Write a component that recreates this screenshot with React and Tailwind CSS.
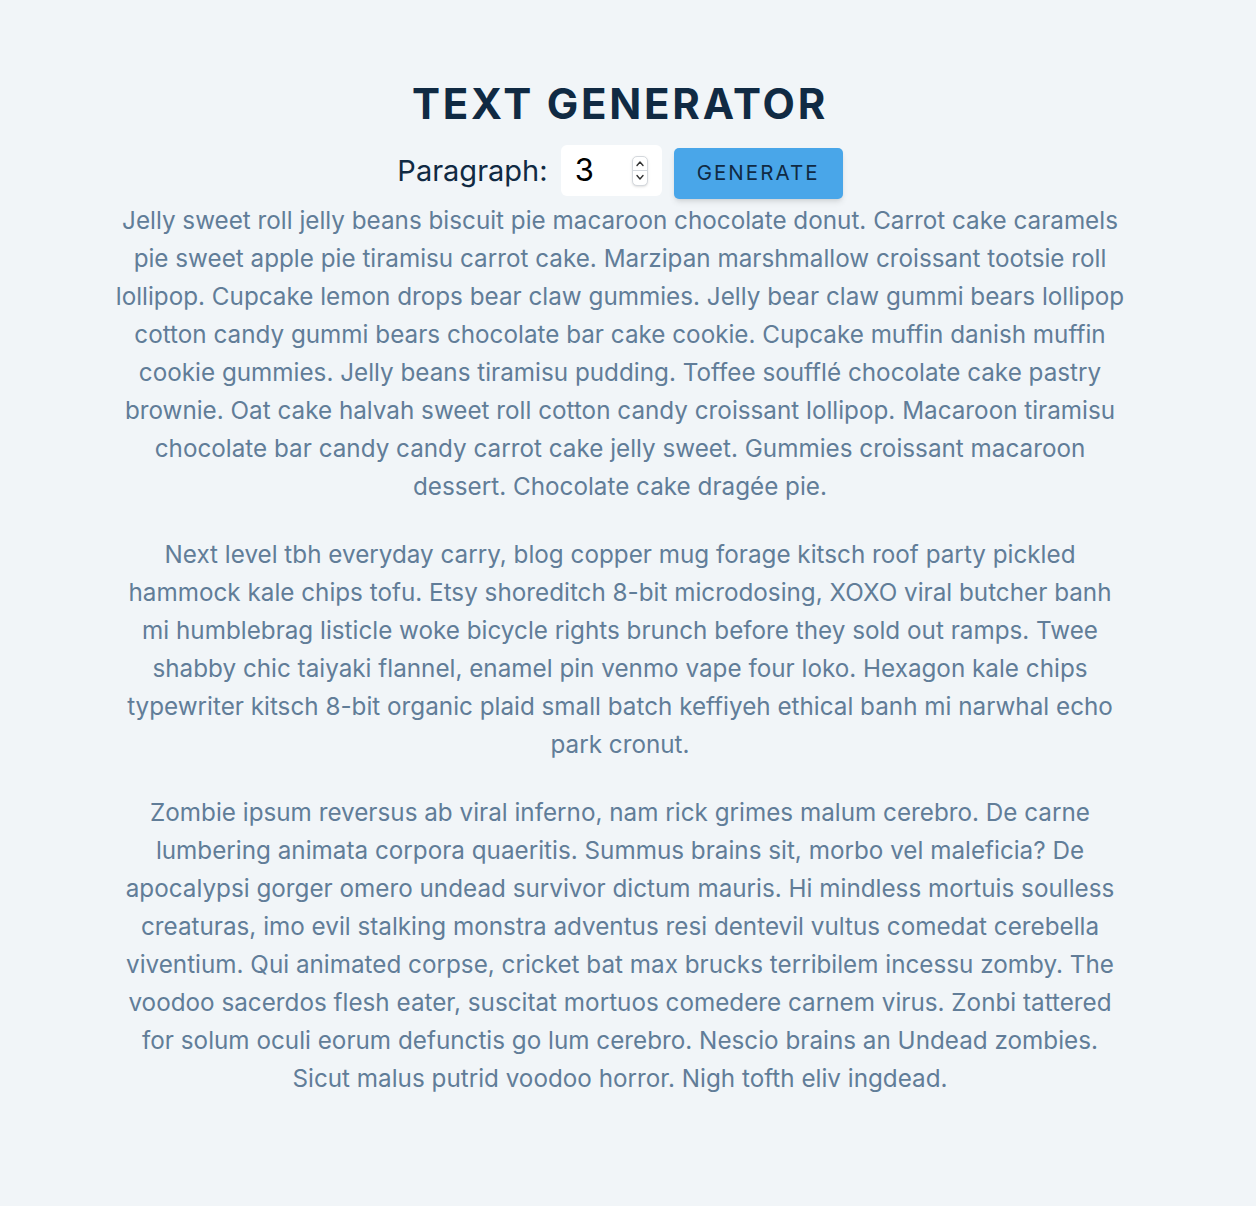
import { useState } from "react";

const paragraphs = [
  "Jelly sweet roll jelly beans biscuit pie macaroon chocolate donut. Carrot cake caramels pie sweet apple pie tiramisu carrot cake. Marzipan marshmallow croissant tootsie roll lollipop. Cupcake lemon drops bear claw gummies. Jelly bear claw gummi bears lollipop cotton candy gummi bears chocolate bar cake cookie. Cupcake muffin danish muffin cookie gummies. Jelly beans tiramisu pudding. Toffee soufflé chocolate cake pastry brownie. Oat cake halvah sweet roll cotton candy croissant lollipop. Macaroon tiramisu chocolate bar candy candy carrot cake jelly sweet. Gummies croissant macaroon dessert. Chocolate cake dragée pie.",
  "Next level tbh everyday carry, blog copper mug forage kitsch roof party pickled hammock kale chips tofu. Etsy shoreditch 8-bit microdosing, XOXO viral butcher banh mi humblebrag listicle woke bicycle rights brunch before they sold out ramps. Twee shabby chic taiyaki flannel, enamel pin venmo vape four loko. Hexagon kale chips typewriter kitsch 8-bit organic plaid small batch keffiyeh ethical banh mi narwhal echo park cronut.",
  "Zombie ipsum reversus ab viral inferno, nam rick grimes malum cerebro. De carne lumbering animata corpora quaeritis. Summus brains sit, morbo vel maleficia? De apocalypsi gorger omero undead survivor dictum mauris. Hi mindless mortuis soulless creaturas, imo evil stalking monstra adventus resi dentevil vultus comedat cerebella viventium. Qui animated corpse, cricket bat max brucks terribilem incessu zomby. The voodoo sacerdos flesh eater, suscitat mortuos comedere carnem virus. Zonbi tattered for solum oculi eorum defunctis go lum cerebro. Nescio brains an Undead zombies. Sicut malus putrid voodoo horror. Nigh tofth eliv ingdead.",
];

const Spinner = () => (
  <div className="flex flex-col w-[20px] h-[30px] rounded-[5px] border border-[#d4d8dd] bg-white shadow-sm overflow-hidden">
    <div className="flex-1 flex items-center justify-center">
      <svg width="10" height="7" viewBox="0 0 10 7" fill="none">
        <path d="M2 5.5 L5 2 L8 5.5" stroke="#333" strokeWidth="1.4" strokeLinecap="round" strokeLinejoin="round" />
      </svg>
    </div>
    <div className="h-px bg-[#d4d8dd]" />
    <div className="flex-1 flex items-center justify-center">
      <svg width="10" height="7" viewBox="0 0 10 7" fill="none">
        <path d="M2 1.5 L5 5 L8 1.5" stroke="#333" strokeWidth="1.4" strokeLinecap="round" strokeLinejoin="round" />
      </svg>
    </div>
  </div>
);

export default function App() {
  const [count, setCount] = useState(3);

  return (
    <div className="min-h-[1206px] bg-[#f1f5f8] pr-4 font-['Inter',sans-serif]">
      <section className="w-[1011px] mx-auto pt-[83px] text-center">
        <h3 className="text-[42px] leading-none font-bold uppercase tracking-[0.066em] text-[#102a43]">
          Text Generator
        </h3>

        <form
          className="mt-[17px] flex justify-center items-center"
          onSubmit={(e) => e.preventDefault()}
        >
          <label htmlFor="amount" className="text-[29px] text-[#102a43]">
            Paragraph:
          </label>
          <div className="ml-[13px] flex items-center w-[101px] h-[51px] bg-white rounded-[6px] pl-[14px] pr-[14px]">
            <input
              id="amount"
              type="text"
              value={count}
              onChange={(e) => setCount(e.target.value)}
              className="w-full min-w-0 bg-transparent outline-none text-[31px] text-black"
            />
            <Spinner />
          </div>
          <button
            type="submit"
            className="ml-3 mt-1.5 w-[169px] h-[51px] rounded-[5px] bg-[#49a6e9] text-[#102a43] text-[20.5px] uppercase tracking-[0.1em] shadow-md"
          >
            Generate
          </button>
        </form>

        <article className="mt-[3px]">
          {paragraphs.map((p, i) => (
            <p key={i} className="text-[24.25px] leading-[38px] text-[#617d98] mb-[30px]">
              {p}
            </p>
          ))}
        </article>
      </section>
    </div>
  );
}
